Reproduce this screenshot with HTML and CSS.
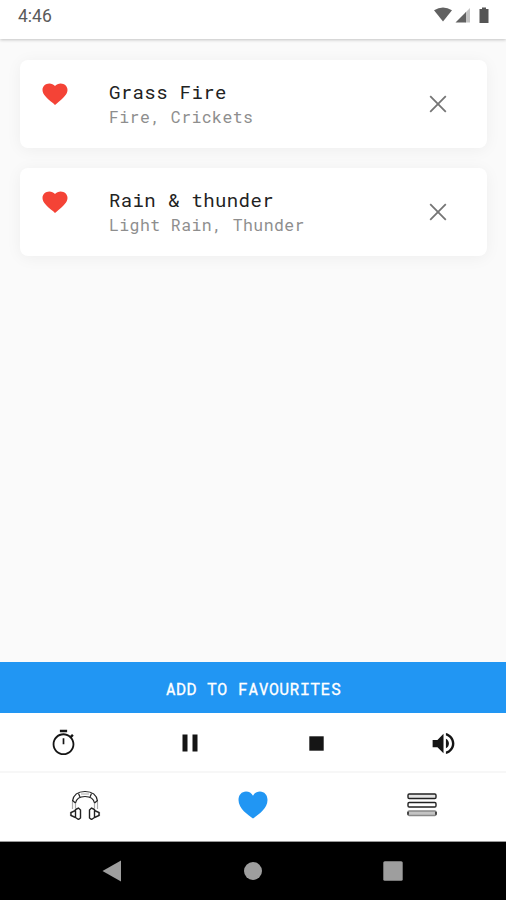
FILE: index.html
```html
<!DOCTYPE html>
<html lang="en">
<head>
    <meta charset="UTF-8">
    <title>Favourites</title>
    <link rel="stylesheet" href="styles.css">
</head>
<body>
    <header class="status-bar">
        <span class="time">4:46</span>
        <svg class="status-icons" width="56" height="18" viewBox="0 0 56 18">
            <path d="M0 4.200Q9-1.400 18 4.200L9 15.500z" fill="#616161"/>
            <path d="M36 2v14.500h-4.500V6.500z" fill="#c4c4c4"/>
            <path d="M21.500 16.500L32 6V16.500z" fill="#616161"/>
            <path d="M48 1.500h4V3h2.500v14h-9V3H48z" fill="#555"/>
        </svg>
    </header>

    <main class="list">
        <div class="card">
            <svg class="heart" width="30" height="28" viewBox="0 0 24 24" preserveAspectRatio="none"><path d="M12 21.350l-1.450-1.320C5.400 15.360 2 12.280 2 8.500 2 5.420 4.420 3 7.500 3c1.740 0 3.410.81 4.500 2.090C13.090 3.810 14.760 3 16.500 3 19.580 3 22 5.420 22 8.500c0 3.780-3.400 6.860-8.550 11.540L12 21.350z"/></svg>
            <div class="text">
                <div class="title">Grass Fire</div>
                <div class="subtitle">Fire, Crickets</div>
            </div>
            <svg class="close" width="18" height="18" viewBox="0 0 18 18"><path d="M1.200 1.200l15.600 15.600M16.800 1.200L1.200 16.800"/></svg>
        </div>
        <div class="card">
            <svg class="heart" width="30" height="28" viewBox="0 0 24 24" preserveAspectRatio="none"><path d="M12 21.350l-1.450-1.320C5.400 15.360 2 12.280 2 8.500 2 5.420 4.420 3 7.500 3c1.740 0 3.410.81 4.500 2.090C13.090 3.810 14.760 3 16.500 3 19.580 3 22 5.420 22 8.500c0 3.780-3.400 6.860-8.550 11.540L12 21.350z"/></svg>
            <div class="text">
                <div class="title">Rain &amp; thunder</div>
                <div class="subtitle">Light Rain, Thunder</div>
            </div>
            <svg class="close" width="18" height="18" viewBox="0 0 18 18"><path d="M1.200 1.200l15.600 15.600M16.800 1.200L1.200 16.800"/></svg>
        </div>
    </main>

    <button class="add-button">ADD TO FAVOURITES</button>

    <div class="controls">
        <div class="cell">
            <svg width="29" height="30" viewBox="0 0 24 24"><path d="M15 1H9v2h6V1zm-3.700 12h1.400V8h-1.400v5zm7.730-5.610l1.420-1.420c-.43-.51-.9-.99-1.410-1.410l-1.420 1.420C16.070 4.740 14.120 4 12 4c-4.970 0-9 4.030-9 9s4.020 9 9 9 9-4.030 9-9c0-2.120-.74-4.070-1.970-5.610zM12 20.500c-4.100 0-7.500-3.400-7.500-7.500S7.900 5.500 12 5.500s7.500 3.400 7.500 7.500-3.400 7.500-7.500 7.500z"/></svg>
        </div>
        <div class="cell">
            <svg width="16" height="18" viewBox="0 0 16 18"><path d="M.5.5h5v17h-5zM10.500.5h5v17h-5z"/></svg>
        </div>
        <div class="cell">
            <svg width="15" height="15" viewBox="0 0 15 15"><path d="M.3.3h14.400v14.400H.3z"/></svg>
        </div>
        <div class="cell">
            <svg width="29" height="29" viewBox="0 0 24 24"><path d="M3 9v6h4l5 5V4L7 9H3zm13.500 3c0-1.770-1.020-3.290-2.500-4.030v8.050c1.480-.73 2.500-2.250 2.500-4.020zM14 3.230v2.060c2.890.86 5 3.540 5 6.710s-2.110 5.850-5 6.710v2.060c4.010-.91 7-4.490 7-8.770s-2.990-7.860-7-8.770z"/></svg>
        </div>
    </div>

    <nav class="tabs">
        <div class="cell">
            <svg class="outline" width="32" height="30" viewBox="0 0 32 30">
                <path class="thin" d="M3.500 19V11M28.500 19V11M6.500 18v-5M25.500 18v-5"/>
                <path d="M3.500 11C4.500 4.500 9 1.500 16 1.500S27.500 4.500 28.500 11"/>
                <path d="M6.500 13C7.500 8 11 6.500 16 6.500s8.500 1.500 9.500 6.500"/>
                <path d="M3.500 10.500l3 2.500M28.500 10.500l-3 2.500M9.500 3.500L11 7M22.500 3.500L21 7"/>
                <path class="thin" d="M12 4h8M1.500 22v4M30.500 22v4"/>
                <path class="cup" d="M6.500 19.500l3-1.500 2 2v8l-2 1.500-3-2zM25.500 19.500l-3-1.500-2 2v8l2 1.500 3-2z"/>
                <path class="cup" d="M6.500 20.500l-4.500 2v3l4.500 2M25.500 20.500l4.500 2v3l-4.500 2"/>
            </svg>
        </div>
        <div class="cell">
            <svg class="active" width="30" height="28" viewBox="0 0 30 28"><path d="M15 27.500C10 24 .5 17.500.5 9 .5 4 3.700.5 8 .5c3 0 5.600 1.500 7 4.300C16.400 2 19 .5 22 .5c4.300 0 7.500 3.500 7.500 8.500 0 8.500-9.500 15-14.500 18.500z"/></svg>
        </div>
        <div class="cell">
            <svg class="outline bars" width="30" height="24" viewBox="0 0 30 24">
                <rect x="1" y="1" width="28" height="4.500" rx="1.200" fill="#e4e4e4"/>
                <rect x="1" y="9.500" width="28" height="4.500" rx="1.200"/>
                <rect x="1" y="18" width="28" height="4.500" rx="1.200" fill="#c4c4c4" stroke="#888"/>
                <path d="M1 18.800v3M29 18.800v3"/>
            </svg>
        </div>
    </nav>

    <footer class="system-nav">
        <svg width="20" height="22" viewBox="0 0 20 22"><path d="M.5 11L19 .5v21z"/></svg>
        <svg width="18" height="18" viewBox="0 0 18 18"><circle cx="9" cy="9" r="9"/></svg>
        <svg width="20" height="20" viewBox="0 0 20 20"><rect x=".3" y=".3" width="19.400" height="19.400" rx="1.500"/></svg>
    </footer>
</body>
</html>
```

FILE: styles.css
```css
* {
    box-sizing: border-box;
}
body {
    margin: 0;
    height: 900px;
    display: flex;
    flex-direction: column;
    background-color: #fafafa;
    font-family: "Roboto Mono", "DejaVu Sans Mono", monospace;
    overflow: hidden;
}
svg {
    display: block;
}
.status-bar {
    height: 39px;
    flex: none;
    display: flex;
    justify-content: space-between;
    align-items: flex-start;
    padding: 6px 16px 0 18px;
    background-color: #fff;
    box-shadow: 0 1px 3px rgba(0, 0, 0, 0.22);
}
.time {
    font-family: Roboto, sans-serif;
    font-size: 17.5px;
    line-height: 20px;
    color: #5a5a5a;
}
.list {
    flex: 1;
    display: flex;
    flex-direction: column;
    gap: 20px;
    padding: 21px 19px 0 20px;
}
.card {
    height: 88px;
    display: flex;
    align-items: flex-start;
    background-color: #fff;
    border-radius: 8px;
    box-shadow: 0 2px 16px rgba(0, 0, 0, 0.05);
}
.heart {
    margin: 19.500px 39.500px 0 19.500px;
    fill: #f44336;
}
.text {
    flex: 1;
    padding-top: 19px;
    white-space: nowrap;
}
.title {
    font-size: 19px;
    line-height: 26px;
    letter-spacing: 0.38px;
    color: #222;
}
.subtitle {
    font-size: 16.500px;
    line-height: 24px;
    letter-spacing: 0.41px;
    color: #8e8e8e;
}
.close {
    margin: 35px 40px 0 0;
    stroke: #757575;
    stroke-width: 1.8;
}
.add-button {
    height: 51px;
    flex: none;
    border: none;
    padding: 1px 0 0 1px;
    background-color: #2196f3;
    color: #fff;
    font-family: inherit;
    font-size: 16.500px;
    letter-spacing: 0.42px;
    -webkit-text-stroke: 0.3px #fff;
}
.controls {
    height: 60px;
    flex: none;
    display: grid;
    grid-template-columns: repeat(4, 1fr);
    background-color: #fff;
    border-bottom: 2px solid #f7f7f7;
    fill: #151515;
}
.cell {
    display: flex;
    align-items: center;
    justify-content: center;
    padding-left: 1px;
}
.controls .cell {
    padding-top: 2px;
}
.tabs {
    height: 69px;
    flex: none;
    display: grid;
    grid-template-columns: repeat(3, 1fr);
    background-color: #fff;
    padding-bottom: 5px;
    border-bottom: 1px solid #999;
}
.outline {
    fill: none;
    stroke: #222;
    stroke-width: 1.2;
}
.bars {
    stroke-width: 1.4;
}
.thin {
    stroke: #aaa;
}
.cup {
    stroke-width: 1.4;
}
.active {
    fill: #2196f3;
}
.system-nav {
    height: 58px;
    flex: none;
    display: flex;
    align-items: center;
    justify-content: space-between;
    padding: 0 103px 0 102px;
    background-color: #000;
    fill: #9e9e9e;
}
```
